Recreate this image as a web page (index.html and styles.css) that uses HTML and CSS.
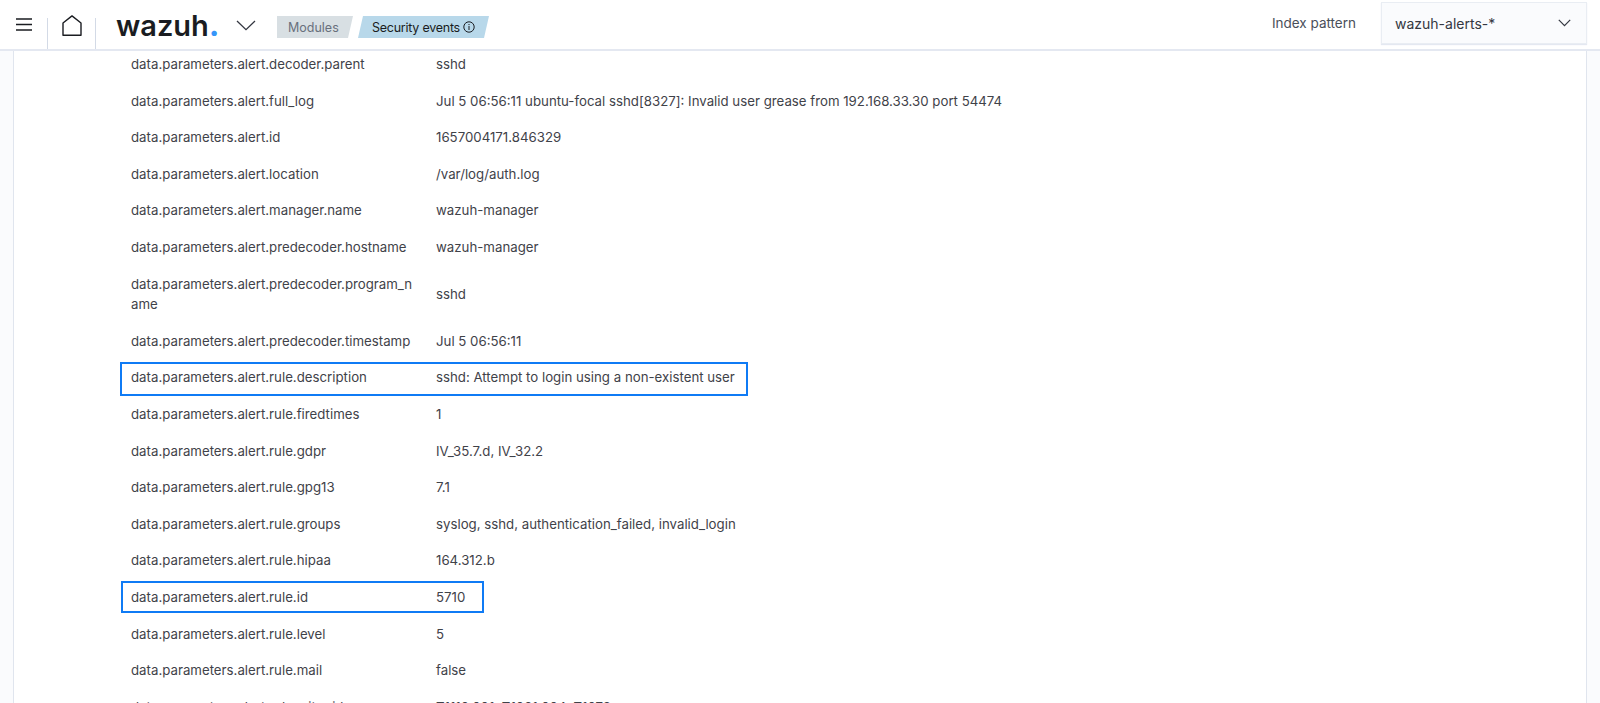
FILE: index.html
```html
<!DOCTYPE html>
<html lang="en">
<head>
<meta charset="utf-8">
<title>Security events</title>
<link rel="stylesheet" href="styles.css">
</head>
<body>
<header class="topbar">
  <div class="nav-left">
    <button class="cell menu-cell" aria-label="Menu">
      <svg width="16" height="13" viewBox="0 0 16 13"><path d="M0 1h16M0 6.5h16M0 12h16" stroke="#1a1c21" stroke-width="1.6" fill="none"/></svg>
    </button>
    <button class="cell home-cell" aria-label="Home">
      <svg width="20" height="21" viewBox="0 0 20 21"><path d="M1 20.2V8L10 .9 19 8v12.2z" stroke="#1a1c21" stroke-width="1.4" fill="none" stroke-linejoin="round"/></svg>
    </button>
    <div class="logo">wazuh<span class="logo-dot">.</span></div>
    <svg class="logo-chev" width="20" height="11" viewBox="0 0 20 11"><path d="M1 1l9 8.6L19 1" stroke="#343741" stroke-width="1.3" fill="none"/></svg>
    <nav class="crumbs">
      <span class="crumb crumb-muted"><span class="crumb-text">Modules</span></span>
      <span class="crumb crumb-active"><span class="crumb-text">Security events
        <svg class="info" width="12" height="12" viewBox="0 0 12 12"><circle cx="6" cy="6" r="5.2" stroke="#1a1c21" fill="none"/><path d="M6 5v4M6 3v1.1" stroke="#1a1c21" fill="none"/></svg></span></span>
    </nav>
  </div>
  <div class="nav-right">
    <span class="pattern-label">Index pattern</span>
    <div class="pattern-select">
      <span>wazuh-alerts-*</span>
      <svg width="13" height="8" viewBox="0 0 13 8"><path d="M.8.8l5.7 5.8L12.2.8" stroke="#343741" stroke-width="1.2" fill="none"/></svg>
    </div>
  </div>
</header>
<main class="page">
  <section class="panel">
    <table class="fields">
      <tbody>
        <tr><td class="key">data.parameters.alert.decoder.parent</td><td class="val">sshd</td></tr>
        <tr><td class="key">data.parameters.alert.full_log</td><td class="val">Jul 5 06:56:11 ubuntu-focal sshd[8327]: Invalid user grease from 192.168.33.30 port 54474</td></tr>
        <tr><td class="key">data.parameters.alert.id</td><td class="val">1657004171.846329</td></tr>
        <tr><td class="key">data.parameters.alert.location</td><td class="val">/var/log/auth.log</td></tr>
        <tr><td class="key">data.parameters.alert.manager.name</td><td class="val">wazuh-manager</td></tr>
        <tr><td class="key">data.parameters.alert.predecoder.hostname</td><td class="val">wazuh-manager</td></tr>
        <tr><td class="key">data.parameters.alert.predecoder.program_name</td><td class="val">sshd</td></tr>
        <tr><td class="key">data.parameters.alert.predecoder.timestamp</td><td class="val">Jul 5 06:56:11</td></tr>
        <tr class="mark mark-long"><td class="key">data.parameters.alert.rule.description</td><td class="val">sshd: Attempt to login using a non-existent user</td></tr>
        <tr><td class="key">data.parameters.alert.rule.firedtimes</td><td class="val">1</td></tr>
        <tr><td class="key">data.parameters.alert.rule.gdpr</td><td class="val">IV_35.7.d, IV_32.2</td></tr>
        <tr><td class="key">data.parameters.alert.rule.gpg13</td><td class="val">7.1</td></tr>
        <tr><td class="key">data.parameters.alert.rule.groups</td><td class="val">syslog, sshd, authentication_failed, invalid_login</td></tr>
        <tr><td class="key">data.parameters.alert.rule.hipaa</td><td class="val">164.312.b</td></tr>
        <tr class="mark mark-short"><td class="key">data.parameters.alert.rule.id</td><td class="val">5710</td></tr>
        <tr><td class="key">data.parameters.alert.rule.level</td><td class="val">5</td></tr>
        <tr><td class="key">data.parameters.alert.rule.mail</td><td class="val">false</td></tr>
        <tr><td class="key">data.parameters.alert.rule.mitre.id</td><td class="val">T1110.001, T1021.004, T1078</td></tr>
      </tbody>
    </table>
  </section>
</main>
</body>
</html>
```
FILE: styles.css
```css
* { box-sizing: border-box; }
html, body { margin: 0; height: 703px; overflow: hidden; }
body {
  font-family: Inter, "Liberation Sans", sans-serif;
  color: #3f4249;
  background: #fafbfd;
}
.topbar {
  position: relative;
  z-index: 2;
  height: 51px;
  display: flex;
  justify-content: space-between;
  background: #fff;
  border-bottom: 2px solid #e4e8f1;
}
.nav-left, .nav-right { display: flex; align-items: center; }
.cell {
  border: 0;
  padding: 0;
  height: 49px;
  width: 48px;
  display: flex;
  justify-content: center;
  background: linear-gradient(#d3dae6, #d3dae6) right bottom / 1px 31px no-repeat;
}
.menu-cell { padding-top: 18px; padding-right: 1px; }
.home-cell { padding-top: 15px; padding-right: 1px; }
.logo {
  margin-left: 20px;
  margin-top: 3px;
  width: 101px;
  font-family: Inter, sans-serif;
  font-size: 29px;
  font-weight: 600;
  line-height: 40px;
  letter-spacing: 0;
  color: #1a1c21;
  white-space: nowrap;
}
.logo-dot { color: #3595f9; font-weight: 800; }
.logo-chev { margin-left: 19px; margin-top: 2px; }
.crumbs { display: flex; gap: 5px; margin-left: 21px; margin-top: 5px; }
.crumb {
  height: 22px;
  padding: 0 14px;
  display: flex;
  align-items: center;
  font-size: 12.5px;
  clip-path: polygon(0 0, 100% 0, calc(100% - 5px) 100%, 0 100%);
}
.crumb-muted { width: 76px; background: #d8dfe3; color: #69707d; padding-left: 11px; }
.crumb-active {
  width: 131px;
  background: #b8d8ea;
  color: #1a1c21;
  padding-left: 14px;
  letter-spacing: -0.25px;
  clip-path: polygon(5px 0, 100% 0, calc(100% - 5px) 100%, 0 100%);
}
.crumb-text { display: flex; align-items: center; gap: 3px; white-space: nowrap; }
.info { flex: none; }
.nav-right { padding-right: 13px; }
.pattern-label { font-size: 13.5px; color: #4a4f5a; margin-right: 25px; margin-top: -3px; }
.pattern-select {
  width: 206px;
  height: 42px;
  margin-top: -3px;
  padding: 0 15px 0 13px;
  display: flex;
  align-items: center;
  justify-content: space-between;
  background: #fafbfd;
  border: 1px solid #e9edf3;
  box-shadow: 0 1px 1px #e4e8f1;
  font-size: 14px;
  color: #343741;
}
.page { padding: 0 13px; height: 670px; overflow: hidden; }
.panel {
  height: 100%;
  background: #fff;
  border-left: 1px solid #e0e5ee;
  border-right: 1px solid #e0e5ee;
  padding-left: 109px;
}
.fields { border-collapse: collapse; table-layout: fixed; width: 1300px; margin-top: -5px; }
.fields td {
  padding: 8px;
  font-size: 13.25px;
  line-height: 20.6px;
  vertical-align: middle;
  overflow-wrap: anywhere;
}
.fields td.key { width: 305px; padding-left: 8px; padding-right: 13px; }
.fields td.val { white-space: nowrap; }
.mark { position: relative; }
.mark::after {
  content: "";
  position: absolute;
  top: 3px;
  bottom: 0;
  left: -2px;
  border: 2px solid #0f7bf5;
}
.mark-long::after { width: 624px; left: -3px; }
.mark-short::after { width: 359px; top: 2px; bottom: 3px; }
```
